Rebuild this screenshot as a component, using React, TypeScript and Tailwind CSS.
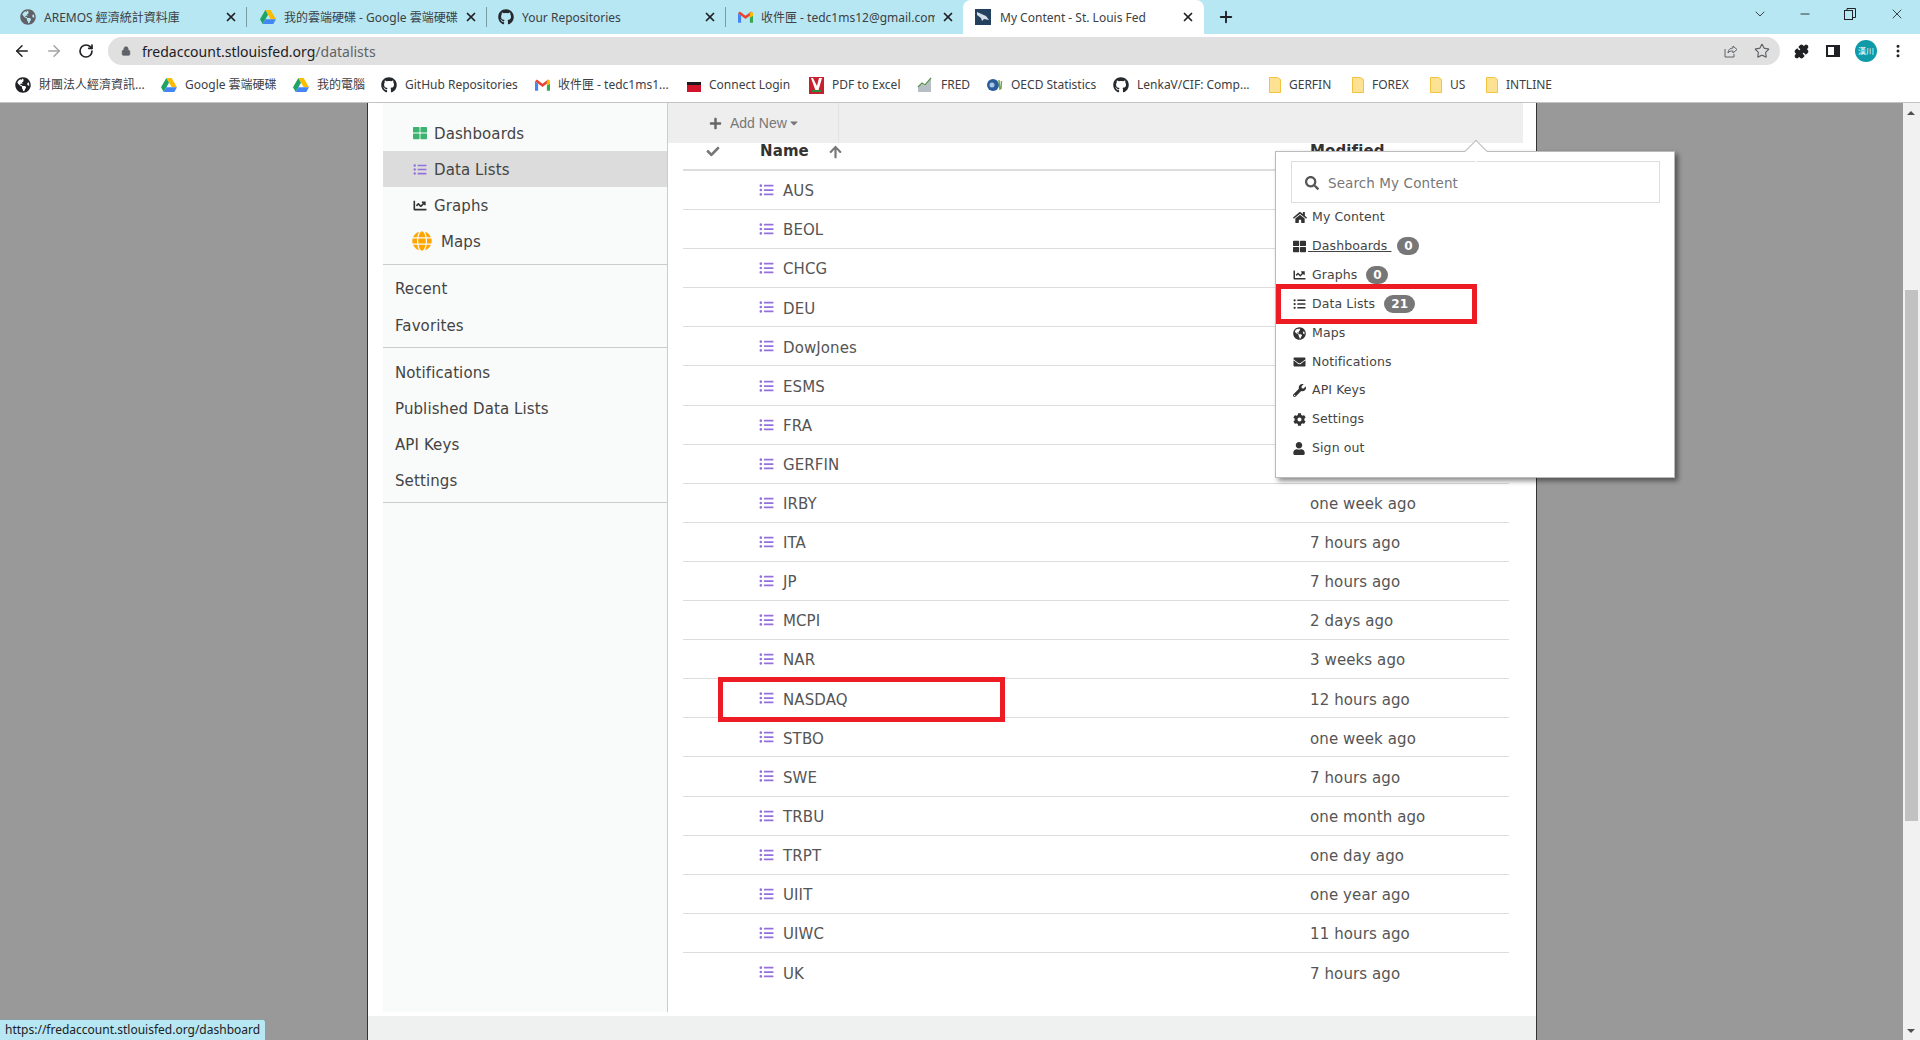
import React from 'react';
import { ArrowLeft, ArrowRight, RotateCw, Star, Plus, X, ChevronDown, Lock, Minus, EllipsisVertical, Puzzle } from 'lucide-react';
import {
  FaCaretDown, FaChartLine, FaCheck, FaCog, FaEnvelope, FaGithub, FaGlobe, FaGlobeAmericas, FaHome,
  FaListUl, FaArrowUp, FaPlus, FaSearch, FaThLarge, FaUser, FaWrench,
} from 'react-icons/fa';

const chromeFont = "font-['Noto_Sans','Noto_Sans_CJK_TC',sans-serif]";
const pageFont = "font-['DejaVu_Sans','Noto_Sans_CJK_TC',sans-serif]";

const DriveIcon = () => (
  <svg viewBox="0 0 24 21" className="w-[16px] h-[14px] shrink-0">
    <path d="M8 0h8l8 14h-8z" fill="#fbbc04" />
    <path d="M8 0l4 7-8 14-4-7z" fill="#1fa463" />
    <path d="M4 21l4-7h16l-4 7z" fill="#4285f4" />
  </svg>
);

const GmailIcon = () => (
  <svg viewBox="0 0 24 18" className="w-[15px] h-[12px] shrink-0">
    <path d="M0 3v15h5V7z" fill="#4285f4" />
    <path d="M24 3v15h-5V7z" fill="#34a853" />
    <path d="M0 3l12 9 12-9-3-3-9 7-9-7z" fill="#ea4335" />
    <path d="M21 0l3 3v4l-5 3V3z" fill="#fbbc04" />
  </svg>
);

const EarthIcon = () => <FaGlobeAmericas className="w-[16px] h-[16px] shrink-0 text-[#5f6368]" />;
const DarkEarthIcon = () => <FaGlobeAmericas className="w-[16px] h-[16px] shrink-0 text-[#202124]" />;
const GithubIcon = () => <FaGithub className="w-[16px] h-[16px] shrink-0 text-[#24292e]" />;

const FredFavicon = () => (
  <svg viewBox="0 0 16 16" className="w-[16px] h-[16px] shrink-0">
    <rect width="16" height="16" fill="#24405f" />
    <path d="M2 3l9 4 3 4-5-1-2 2-1-3-4-3z" fill="#d5dde6" />
  </svg>
);

const ConnectIcon = () => (
  <svg viewBox="0 0 14 10" className="w-[14px] h-[10px] shrink-0 mt-[3px]">
    <rect width="14" height="3" fill="#1a1a1a" />
    <rect y="3" width="14" height="7" fill="#d2142b" />
  </svg>
);

const PdfIcon = () => (
  <svg viewBox="0 0 15 17" className="w-[15px] h-[17px] shrink-0">
    <rect width="15" height="17" fill="#c8202f" />
    <path d="M4 1l4 8 2-8h3L9 15H7L2 1z" fill="#fff" />
    <rect x="3" y="13" width="9" height="2" fill="#2c8a3d" />
  </svg>
);

const FredIcon = () => (
  <svg viewBox="0 0 16 16" className="w-[16px] h-[16px] shrink-0">
    <path d="M1 15V10l4-3 3 2 6-7v13z" fill="#b6bec6" />
    <path d="M1 10l4-4 3 2 6-7" fill="none" stroke="#5c8f4c" strokeWidth="1.2" />
  </svg>
);

const OecdIcon = () => (
  <svg viewBox="0 0 16 16" className="w-[16px] h-[16px] shrink-0">
    <circle cx="6" cy="8" r="6" fill="#2c5d9b" />
    <circle cx="5" cy="8" r="2.5" fill="#a9c6e3" />
    <path d="M12 3l1 10M14.500 4l-.5 8" stroke="#6fa83c" strokeWidth="1.400" fill="none" />
  </svg>
);

const FolderIcon = () => (
  <svg viewBox="0 0 12 16" className="w-[12px] h-[16px] shrink-0">
    <path d="M.5.500h8l3 2v13H.5z" fill="#fde293" stroke="#f3c33f" />
  </svg>
);

const tabs = [
  { icon: <EarthIcon />, title: 'AREMOS 經濟統計資料庫', width: 'w-[240px]', pad: 'pl-[13px]', gap: 'ml-[2px]' },
  { icon: <DriveIcon />, title: '我的雲端硬碟 - Google 雲端硬碟', width: 'w-[240px]', pad: 'pl-[13px]', gap: 'ml-[2px]' },
  { icon: <GithubIcon />, title: 'Your Repositories', width: 'w-[239px]', pad: 'pl-[11px]', gap: 'ml-[2px]' },
  { icon: <GmailIcon />, title: '收件匣 - tedc1ms12@gmail.com', width: 'w-[238px]', pad: 'pl-[12px]', gap: 'ml-[6px]' },
];

const bookmarks = [
  { icon: <DarkEarthIcon />, label: '財團法人經濟資訊...', width: 'w-[146px]' },
  { icon: <DriveIcon />, label: 'Google 雲端硬碟', width: 'w-[132px]' },
  { icon: <DriveIcon />, label: '我的電腦', width: 'w-[88px]' },
  { icon: <GithubIcon />, label: 'GitHub Repositories', width: 'w-[154px]' },
  { icon: <GmailIcon />, label: '收件匣 - tedc1ms1...', width: 'w-[152px]' },
  { icon: <ConnectIcon />, label: 'Connect Login', width: 'w-[122px]' },
  { icon: <PdfIcon />, label: 'PDF to Excel', width: 'w-[108px]' },
  { icon: <FredIcon />, label: 'FRED', width: 'w-[70px]' },
  { icon: <OecdIcon />, label: 'OECD Statistics', width: 'w-[126px]' },
  { icon: <GithubIcon />, label: 'LenkaV/CIF: Comp...', width: 'w-[156px]' },
  { icon: <FolderIcon />, label: 'GERFIN', width: 'w-[83px]' },
  { icon: <FolderIcon />, label: 'FOREX', width: 'w-[78px]' },
  { icon: <FolderIcon />, label: 'US', width: 'w-[56px]' },
  { icon: <FolderIcon />, label: 'INTLINE', width: 'w-[90px]' },
];

const rows = [
  { name: 'AUS', modified: '' },
  { name: 'BEOL', modified: '' },
  { name: 'CHCG', modified: '' },
  { name: 'DEU', modified: '' },
  { name: 'DowJones', modified: '' },
  { name: 'ESMS', modified: '' },
  { name: 'FRA', modified: '' },
  { name: 'GERFIN', modified: '' },
  { name: 'IRBY', modified: 'one week ago' },
  { name: 'ITA', modified: '7 hours ago' },
  { name: 'JP', modified: '7 hours ago' },
  { name: 'MCPI', modified: '2 days ago' },
  { name: 'NAR', modified: '3 weeks ago' },
  { name: 'NASDAQ', modified: '12 hours ago' },
  { name: 'STBO', modified: 'one week ago' },
  { name: 'SWE', modified: '7 hours ago' },
  { name: 'TRBU', modified: 'one month ago' },
  { name: 'TRPT', modified: 'one day ago' },
  { name: 'UIIT', modified: 'one year ago' },
  { name: 'UIWC', modified: '11 hours ago' },
  { name: 'UK', modified: '7 hours ago' },
];

const popupItems = [
  { icon: <FaHome className="w-[14px] h-[13px]" />, label: 'My Content' },
  { icon: <FaThLarge className="w-[13px] h-[13px]" />, label: 'Dashboards', badge: '0', underline: true },
  { icon: <FaChartLine className="w-[13px] h-[12px]" />, label: 'Graphs', badge: '0' },
  { icon: <FaListUl className="w-[13px] h-[12px]" />, label: 'Data Lists', badge: '21' },
  { icon: <FaGlobeAmericas className="w-[13px] h-[13px]" />, label: 'Maps' },
  { icon: <FaEnvelope className="w-[13px] h-[12px]" />, label: 'Notifications' },
  { icon: <FaWrench className="w-[13px] h-[13px]" />, label: 'API Keys' },
  { icon: <FaCog className="w-[13px] h-[13px]" />, label: 'Settings' },
  { icon: <FaUser className="w-[12px] h-[13px]" />, label: 'Sign out' },
];

const BrowserChrome = () => (
  <div className={`${chromeFont} shrink-0`}>
    {/* Tab strip */}
    <div className="h-[34px] bg-[#b7e7f3] flex pl-[7px] text-[12px] text-[#3c4043]">
      {tabs.map((tab, i) => (
        <div key={tab.title} className={`${tab.width} ${tab.pad} h-full flex items-center pr-[9px] relative`}>
          {tab.icon}
          <span className="ml-[8px] pt-[2px] flex-1 min-w-0 whitespace-nowrap overflow-hidden">{tab.title}</span>
          <X className={`${tab.gap} w-[14px] h-[14px] shrink-0 text-[#202124]`} strokeWidth={3} />
          {i < 3 && <div className="absolute right-0 top-[7px] h-[20px] w-px bg-[#7c9aa2]" />}
        </div>
      ))}
      <div className="w-[241px] h-full -ml-[1px] bg-white rounded-t-[8px] flex items-center pl-[12px] pr-[9px]">
        <FredFavicon />
        <span className="ml-[9px] pt-[2px] flex-1 whitespace-nowrap">My Content - St. Louis Fed</span>
        <X className="w-[14px] h-[14px] shrink-0 text-[#202124]" strokeWidth={3} />
      </div>
      <Plus className="w-[18px] h-[18px] ml-[13px] mt-[8px] text-[#202124]" strokeWidth={2.5} />
      <div className="ml-auto flex items-center text-[#202124]">
        <ChevronDown className="w-[16px] h-[16px] mb-[6px] mr-[30px]" strokeWidth={1.25} />
        <Minus className="w-[14px] h-[14px] mb-[6px] mr-[32px]" strokeWidth={1.5} />
        <svg viewBox="0 0 12 12" className="w-[12px] h-[12px] mb-[6px] mr-[33px]" fill="none" stroke="#202124">
          <rect x="0.5" y="2.5" width="8" height="9" />
          <path d="M3 2.500V.5h8.500v9H8.500" />
        </svg>
        <X className="w-[16px] h-[16px] mb-[6px] mr-[15px]" strokeWidth={1.25} />
      </div>
    </div>
    {/* Address bar */}
    <div className="h-[34px] bg-white flex items-center">
      <ArrowLeft className="w-[18px] h-[18px] ml-[13px] text-[#202124]" strokeWidth={2} />
      <ArrowRight className="w-[18px] h-[18px] ml-[14px] text-[#a3a3a3]" strokeWidth={2} />
      <RotateCw className="w-[16px] h-[16px] ml-[15px] text-[#202124]" strokeWidth={2.5} />
      <div className="ml-[14px] w-[1672px] h-[28px] rounded-full bg-[#e0e0e0] flex items-center pl-[13px] pr-[10px] text-[14px]">
        <Lock className="w-[10px] h-[12px] text-[#5f6368] fill-[#5f6368]" />
        <span className="ml-[11px] text-[#202124]">fredaccount.stlouisfed.org</span>
        <span className="text-[#5f6368]">/datalists</span>
        <svg viewBox="0 0 16 16" className="w-[16px] h-[16px] ml-auto text-[#5f6368]" fill="none" stroke="currentColor" strokeWidth="1">
          <path d="M3 6v8h9v-3M6 10c0-3 2-5 5-5V3l4 3.500L11 10V8c-2 0-4 0-5 2z" />
        </svg>
        <Star className="w-[16px] h-[16px] ml-[16px] text-[#5f6368]" strokeWidth={1.75} />
      </div>
      <Puzzle className="w-[15px] h-[15px] ml-[14px] text-[#202124] fill-[#202124]" />
      <div className="w-[14px] h-[12px] ml-[17px] border-[2.5px] border-[#202124] border-r-[6px]" />
      <div className="w-[22px] h-[22px] ml-[15px] rounded-full bg-[#0e9aa7] text-white text-[8px] flex items-center justify-center">漢川</div>
      <EllipsisVertical className="w-[16px] h-[16px] ml-[13px] text-[#202124]" strokeWidth={2.5} />
    </div>
    {/* Bookmarks bar */}
    <div className="h-[34px] bg-white flex items-center pl-[15px] text-[12px] text-[#3c4043]">
      {bookmarks.map((b) => (
        <div key={b.label + b.width} className={`${b.width} flex items-center gap-[8px] whitespace-nowrap shrink-0`}>
          {b.icon}
          <span>{b.label}</span>
        </div>
      ))}
    </div>
    <div className="h-px bg-[#c4c4c4]" />
  </div>
);

const SidebarLink = ({ label, className }: { label: string; className: string }) => (
  <div className={`${className} flex items-center pl-[12px] pt-[2px]`}>{label}</div>
);

const Sidebar = () => (
  <aside className="w-[285px] ml-[15px] mb-[4px] shrink-0 bg-[#f9fafa] border-r border-[#ccc] text-[15px] text-[#444] tracking-[0.1px] flex flex-col">
    <div className="pt-[12px] pb-[5px] border-b border-[#ccc]">
      <div className="h-[36px] pl-[29px] flex items-center gap-[6px]">
        <FaThLarge className="w-[16px] h-[14px] text-[#3cb371]" />
        <span className="pt-[2px]">Dashboards</span>
      </div>
      <div className="h-[36px] pl-[29px] flex items-center gap-[6px] bg-[#dcdcdc]">
        <FaListUl className="w-[16px] h-[13px] text-[#9370db]" />
        <span className="pt-[2px]">Data Lists</span>
      </div>
      <div className="h-[36px] pl-[29px] flex items-center gap-[6px]">
        <FaChartLine className="w-[16px] h-[13px] text-[#333]" />
        <span className="pt-[2px]">Graphs</span>
      </div>
      <div className="h-[36px] pl-[29px] flex items-center gap-[9px]">
        <FaGlobe className="w-[20px] h-[20px] text-[#ffa500]" />
        <span className="pt-[2px]">Maps</span>
      </div>
    </div>
    <div className="pt-[5px] pb-[3px] border-b border-[#ccc]">
      <SidebarLink label="Recent" className="h-[37px]" />
      <SidebarLink label="Favorites" className="h-[37px]" />
    </div>
    <div className="pt-[6px] pb-[4px] border-b border-[#ccc]">
      <SidebarLink label="Notifications" className="h-[36px]" />
      <SidebarLink label="Published Data Lists" className="h-[36px]" />
      <SidebarLink label="API Keys" className="h-[36px]" />
      <SidebarLink label="Settings" className="h-[36px]" />
    </div>
  </aside>
);

const ListTable = () => (
  <main className="flex-1 min-w-0">
    <div className="h-[40px] mr-[13px] bg-[#eeeeee] flex font-['Liberation_Sans',sans-serif] text-[14px] text-[#777]">
      <div className="w-[171px] h-full border-r border-[#e2e2e2] flex items-center pl-[41px]">
        <FaPlus className="w-[13px] h-[13px] text-[#666]" />
        <span className="ml-[8px]">Add New</span>
        <FaCaretDown className="w-[10px] h-[12px] ml-[2px]" />
      </div>
    </div>
    <div className="ml-[15px] w-[826px] text-[15px] text-[#555] tracking-[0.1px]">
      <div className="h-[28px] pb-[9px] border-b-2 border-[#ddd] flex items-center font-bold text-[#333]">
        <div className="w-[627px] flex items-center">
          <FaCheck className="ml-[22px] w-[16px] h-[13px] text-[#777]" />
          <span className="ml-[39px]">Name</span>
          <FaArrowUp className="ml-[20px] w-[13px] h-[14px] text-[#777]" />
        </div>
        <span>Modified</span>
      </div>
      {rows.map((row) => (
        <div key={row.name} className="h-[39.1px] border-b border-[#ddd] last:border-b-0 flex items-center">
          <div className="w-[627px] pl-[75px] flex items-center gap-[8px]">
            <FaListUl className="w-[17px] h-[14px] text-[#9370db]" />
            <span className="pt-[3px]">{row.name}</span>
          </div>
          <span className="pt-[3px]">{row.modified}</span>
        </div>
      ))}
    </div>
  </main>
);

const ContentPopup = () => (
  <div className="absolute left-[1275px] top-[48px] w-[400px] h-[327px] bg-white border border-[#bbb] shadow-[3px_3px_5px_rgba(0,0,0,0.45)] pl-[15px] pr-[14px] pt-[9px] text-[12.5px] text-[#444] tracking-[0.1px]">
    <div className="absolute left-[192px] -top-[9px] w-[16px] h-[16px] rotate-45 bg-white border-l border-t border-[#bbb]" />
    <div className="h-[42px] pt-[2px] border border-[#ddd] flex items-center pl-[13px] text-[13.5px] text-[#777]">
      <FaSearch className="w-[14px] h-[14px] text-[#555]" />
      <span className="ml-[9px]">Search My Content</span>
    </div>
    <div>
      {popupItems.map((item) => (
        <div key={item.label} className="h-[28.9px] pl-[2px] flex items-center">
          <span className={`${item.underline ? 'w-[15px]' : 'w-[19px]'} shrink-0 flex items-center text-[#333]`}>{item.icon}</span>
          <span className={item.underline ? 'underline whitespace-pre' : ''}>{item.underline ? ` ${item.label} ` : item.label}</span>
          {item.badge && (
            <span className={`${item.underline ? 'ml-[6px]' : 'ml-[9px]'} ${item.badge === '21' ? 'w-[31px]' : 'w-[22px]'} h-[18px] rounded-full bg-[#777] text-white text-[12px] font-bold flex items-center justify-center`}>
              {item.badge}
            </span>
          )}
        </div>
      ))}
    </div>
  </div>
);

export default function App() {
  return (
    <div className="w-[1920px] h-[1040px] overflow-hidden flex flex-col bg-[#999999] relative">
      <BrowserChrome />
      <div className={`${pageFont} flex-1 min-h-0 flex relative`}>
        <div className="flex-1 min-w-0 pl-[367px]">
          <div className="w-[1170px] h-full bg-white border-x border-[#333] flex flex-col">
            <div className="flex-1 min-h-0 flex">
              <Sidebar />
              <ListTable />
            </div>
            <div className="h-[24px] shrink-0 bg-[#eff1f1]" />
          </div>
        </div>
        {/* Page scrollbar */}
        <div className="w-[17px] shrink-0 bg-[#f1f1f1] relative">
          <div className="absolute left-[4px] top-[8px] w-0 h-0 border-x-[4px] border-x-transparent border-b-[4px] border-b-[#505050]" />
          <div className="absolute left-[2px] top-[187px] w-[13px] h-[531px] bg-[#c1c1c1]" />
          <div className="absolute left-[4px] bottom-[7px] w-0 h-0 border-x-[4px] border-x-transparent border-t-[4px] border-t-[#505050]" />
        </div>
        <ContentPopup />
        {/* Red annotation boxes */}
        <div className="absolute left-[718px] top-[574px] w-[287px] h-[45px] border-[5px] border-[#ed1c24]" />
        <div className="absolute left-[1276px] top-[181px] w-[201px] h-[40px] border-[5px] border-[#ed1c24]" />
      </div>
      <div className={`${chromeFont} absolute left-0 bottom-0 w-[266px] h-[21px] bg-[#b7e7f3] border-t border-r border-[#8a9ea3] rounded-tr-[3px] pl-[5px] text-[12px] leading-[20px] text-[#202124]`}>
        https://fredaccount.stlouisfed.org/dashboard
      </div>
    </div>
  );
}
